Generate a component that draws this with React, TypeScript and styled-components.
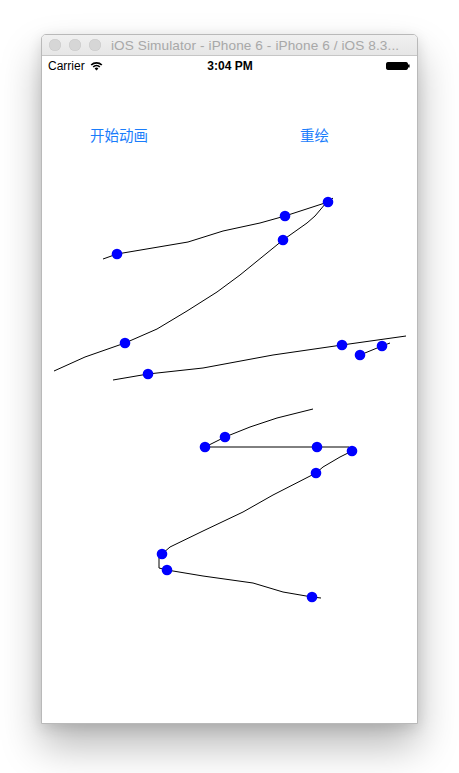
import React from "react";
import styled, { createGlobalStyle } from "styled-components";

const Global = createGlobalStyle`
  html, body { margin: 0; padding: 0; background: #ffffff; }
  body { font-family: "Liberation Sans", Arial, sans-serif; }
`;

const Desk = styled.div`
  width: 459px;
  height: 773px;
  padding: 34px 0 0 41px;
  box-sizing: border-box;
  background: #ffffff;
`;

const Window = styled.div`
  width: 377px;
  border: 1px solid #b9b9b9;
  border-radius: 5px 5px 0 0;
  background: #ffffff;
  box-shadow: 0 22px 40px rgba(0, 0, 0, 0.28), 0 4px 14px rgba(0, 0, 0, 0.12);
  box-sizing: border-box;
  overflow: hidden;
`;

const TitleBar = styled.div`
  height: 20px;
  display: flex;
  align-items: center;
  padding-left: 7px;
  background: linear-gradient(#f0f0f0, #e6e6e6);
  border-bottom: 1px solid #c6c6c6;
`;

const Light = styled.span`
  width: 12px;
  height: 12px;
  border-radius: 50%;
  background: #d6d6d6;
  box-shadow: inset 0 0 0 0.5px #c8c8c8;
  margin-right: 8px;
  flex: none;
`;

const Title = styled.span`
  margin-left: 2px;
  font-size: 13.6px;
  color: #a8a8a8;
  white-space: nowrap;
  letter-spacing: 0.1px;
`;

const Screen = styled.div`
  width: 375px;
  height: 667px;
  display: flex;
  flex-direction: column;
  background: #ffffff;
`;

const StatusBar = styled.div`
  height: 20px;
  display: grid;
  grid-template-columns: 1fr auto 1fr;
  align-items: center;
  padding: 0 6px;
  font-size: 12px;
  color: #000;
`;

const Left = styled.div`
  display: flex;
  align-items: center;
  gap: 5px;
`;

const Time = styled.div`
  font-weight: bold;
  padding-left: 1px;
`;

const Right = styled.div`
  display: flex;
  justify-content: flex-end;
  padding-right: 1px;
`;

const ButtonRow = styled.div`
  height: 80px;
  display: flex;
  justify-content: space-between;
  align-items: flex-start;
  padding: 49px 88px 0 48px;
  box-sizing: border-box;
`;

const TextButton = styled.button`
  border: none;
  background: none;
  padding: 0;
  margin: 0;
  font-family: "Noto Sans CJK SC", sans-serif;
  font-size: 14.5px;
  line-height: 20px;
  color: #1a7dfb;
`;

const Canvas = styled.svg`
  display: block;
  flex: 1;
  width: 375px;
`;

type Pt = [number, number];

const lines: Pt[][] = [
  [[103, 259], [117, 254], [188, 242], [223, 231], [260, 223], [285, 216], [328, 202], [333, 198]],
  [[326, 203], [315, 216], [307, 223], [283, 240], [240, 275], [217, 292], [187, 311], [157, 329], [125, 343], [85, 357], [54, 371]],
  [[113, 380], [148, 374], [203, 368], [273, 355], [342, 345], [406, 336]],
  [[360, 355], [382, 346], [390, 343]],
  [
    [313, 409], [277, 418], [250, 427], [225, 437], [205, 447], [317, 447], [349, 447], [352, 451], [340, 457],
    [323, 467], [316, 473], [273, 495], [243, 512], [203, 531], [170, 547], [162, 554], [159, 555],
    [159, 568], [167, 570], [203, 576], [253, 583], [283, 592], [312, 597], [321, 598],
  ],
];

const dots: Pt[] = [
  [117, 254], [285, 216], [328, 202], [283, 240], [125, 343], [148, 374], [342, 345],
  [360, 355], [382, 346], [225, 437], [205, 447], [317, 447], [352, 451], [316, 473],
  [162, 554], [167, 570], [312, 597],
];

const Wifi = () => (
  <svg width="13" height="10" viewBox="0 0 13 10">
    <path d="M0.6 3.4 A8.5 8.5 0 0 1 12.4 3.4 L11.2 4.6 A6.8 6.8 0 0 0 1.8 4.6 Z" fill="#000" />
    <path d="M2.6 5.4 A5.6 5.6 0 0 1 10.4 5.4 L9.2 6.6 A3.9 3.9 0 0 0 3.8 6.6 Z" fill="#000" />
    <path d="M4.6 7.4 A2.7 2.7 0 0 1 8.4 7.4 L6.5 9.4 Z" fill="#000" />
  </svg>
);

const Battery = () => (
  <svg width="24" height="8" viewBox="0 0 24 8">
    <rect x="0.5" y="0.5" width="21" height="7" rx="1.2" fill="#000" stroke="#000" />
    <rect x="22" y="2.5" width="1.6" height="3" fill="#000" />
  </svg>
);

export default function App() {
  return (
    <>
      <Global />
      <Desk>
        <Window>
          <TitleBar>
            <Light />
            <Light />
            <Light />
            <Title>iOS Simulator - iPhone 6 - iPhone 6 / iOS 8.3...</Title>
          </TitleBar>
          <Screen>
            <StatusBar>
              <Left>
                <span>Carrier</span>
                <Wifi />
              </Left>
              <Time>3:04 PM</Time>
              <Right>
                <Battery />
              </Right>
            </StatusBar>
            <ButtonRow>
              <TextButton>开始动画</TextButton>
              <TextButton>重绘</TextButton>
            </ButtonRow>
            <Canvas viewBox="42 156 375 567">
              {lines.map((l, i) => (
                <polyline
                  key={i}
                  points={l.map((p) => p.join(",")).join(" ")}
                  fill="none"
                  stroke="#000"
                  strokeWidth={1}
                  strokeLinejoin="round"
                />
              ))}
              {dots.map(([x, y], i) => (
                <circle key={i} cx={x} cy={y} r={5.3} fill="#0000ff" />
              ))}
            </Canvas>
          </Screen>
        </Window>
      </Desk>
    </>
  );
}
